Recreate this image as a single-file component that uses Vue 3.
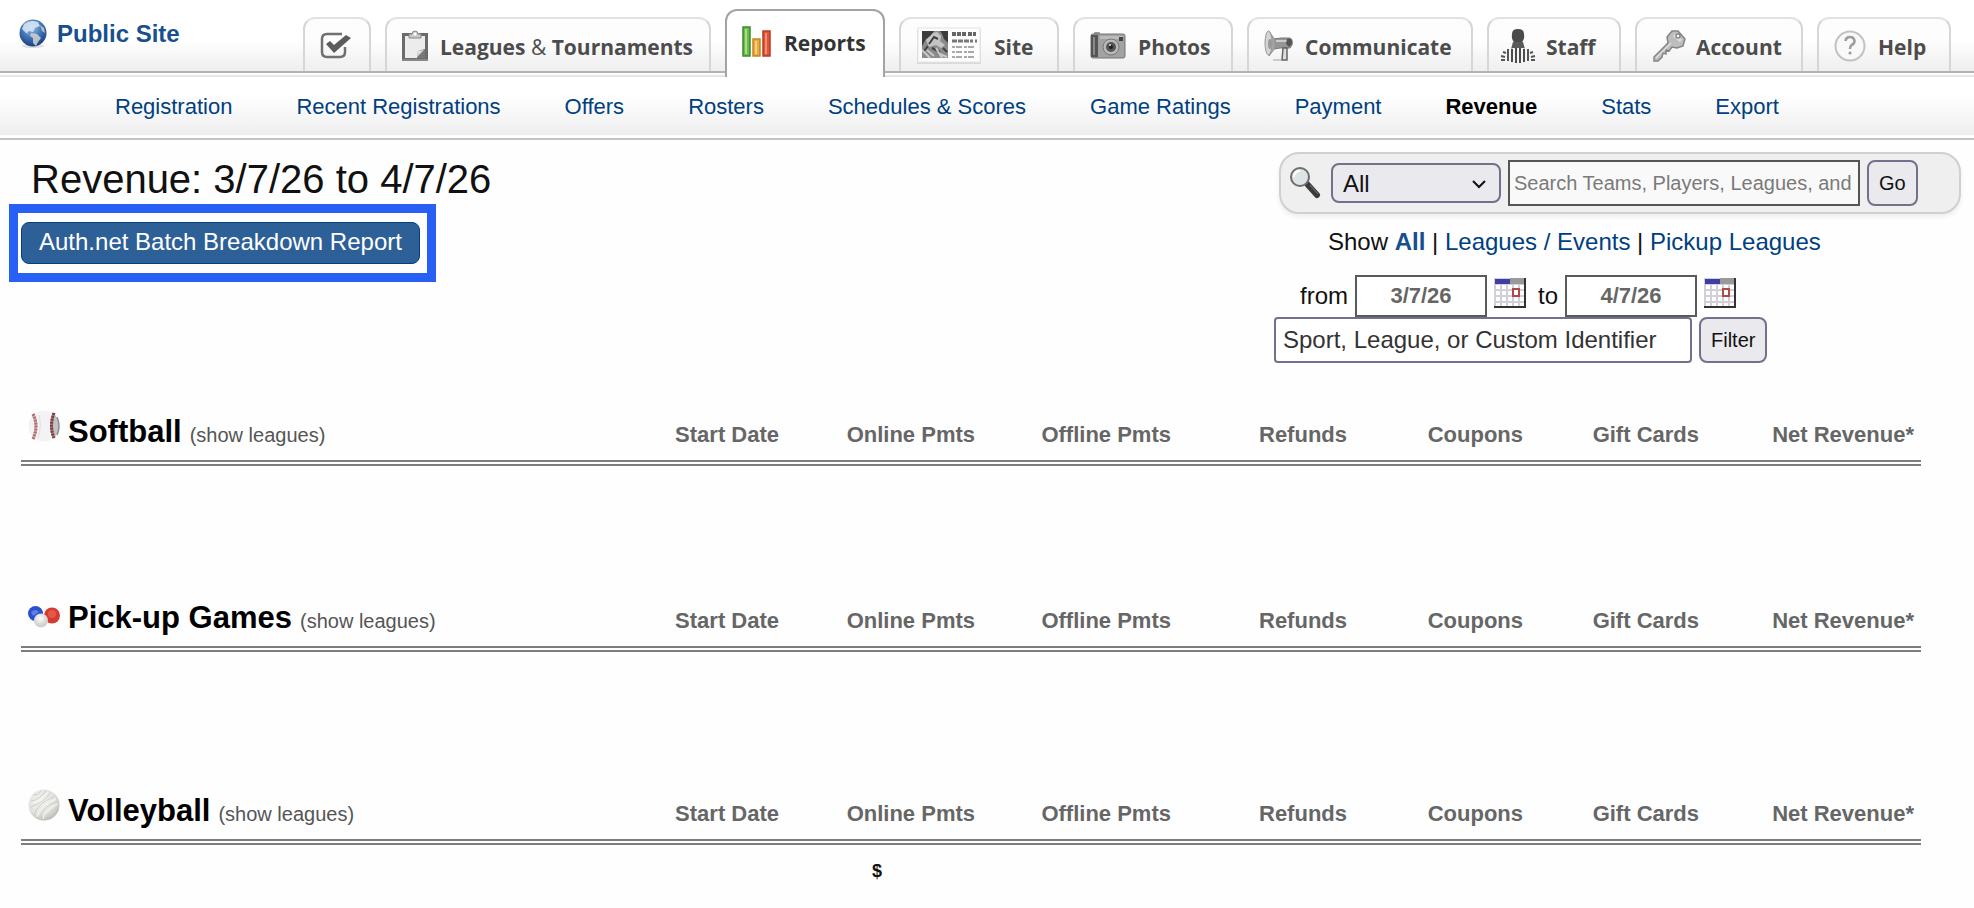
<template>
  <div class="page">

    <!-- TOP BAR -->
    <header class="topbar">
      <a class="public-site" href="#">
        <svg width="30" height="30" viewBox="0 0 30 30" aria-hidden="true">
          <defs>
            <radialGradient id="globe" cx="0.45" cy="0.3" r="0.7">
              <stop offset="0" stop-color="#9fc0e8" />
              <stop offset="0.5" stop-color="#4679b8" />
              <stop offset="1" stop-color="#17407f" />
            </radialGradient>
          </defs>
          <ellipse cx="15" cy="27" rx="11" ry="2" fill="#dedede" />
          <circle cx="15" cy="14" r="13.5" fill="url(#globe)" />
          <path d="M6 5 Q12 0 20 3 L22 7 L17 9 L15 13 L11 12 L9 14 L12 16 L8 14 L4 10 Z" fill="#dbe8f6" opacity="0.85" />
          <path d="M13 14 L19 15 L23 19 L20 23 L18 27 L15 24 L15 19 L12 17 Z" fill="#c9ccd2" opacity="0.9" />
          <path d="M22 6 L26 9 L27 14 L24 12 Z" fill="#aebdd2" />
        </svg>
        Public Site
      </a>

      <nav class="tabs">
        <a class="tab tab-check" href="#" aria-label="Tasks">
          <svg width="32" height="28" viewBox="0 0 32 28" fill="none" stroke="#707070">
            <path d="M22 2 H7 Q2 2 2 7 V20 Q2 25 7 25 H20 Q25 25 25 20 V15" stroke-width="2.5" />
            <path d="M6 12 L10 9 L14 13 L26 3 L31 6 L14 21 Z" fill="#5c5c5c" stroke="none" />
          </svg>
        </a>

        <a class="tab tab-leagues" href="#">
          <svg width="26" height="32" viewBox="0 0 26 32">
            <rect x="1.5" y="4.5" width="23" height="25" fill="#ededed" stroke="#6b6b6b" stroke-width="3" />
            <path d="M0 29 H26 V31 H0 Z" fill="#888" />
            <path d="M4 6 H22 V20 L15 27 H4 Z" fill="#ececec" />
            <path d="M15 28 L16 21 L23 19 V28 Z" fill="#777" />
            <path d="M15 27 L16 21 L22 20 Z" fill="#ddd" />
            <path d="M7 8 V4 H10 Q10 1 13 1 T16 4 H19 V8 Z" fill="#c9c9c9" stroke="#888" />
            <circle cx="13" cy="4" r="1.5" fill="#fff" />
          </svg>
          <span>Leagues <i>&amp;</i> Tournaments</span>
        </a>

        <a class="tab active tab-reports" href="#">
          <svg width="30" height="32" viewBox="0 0 30 32">
            <rect x="1" y="1" width="7" height="29" fill="#6cbb4c" stroke="#3d8a2c" stroke-width="1.5" />
            <rect x="3" y="3" width="2" height="25" fill="#a5df86" />
            <rect x="11" y="13" width="7" height="17" fill="#eda93d" stroke="#c78425" stroke-width="1.5" />
            <rect x="13" y="15" width="2" height="13" fill="#f9d183" />
            <rect x="21" y="5" width="7" height="25" fill="#df5638" stroke="#b93a23" stroke-width="1.5" />
            <rect x="23" y="7" width="2" height="21" fill="#f28e72" />
          </svg>
          <span>Reports</span>
        </a>

        <a class="tab tab-site" href="#">
          <svg width="66" height="38" viewBox="0 0 66 38">
            <rect x="1" y="2" width="64" height="35" rx="1" fill="#c9c9c9" opacity="0.6" />
            <rect x="2" y="1" width="62" height="34" fill="#fdfdfd" stroke="#e4e4e4" />
            <rect x="6" y="4" width="26" height="27" fill="#8a8a8a" />
            <path d="M6 4 H18 L15 9 L10 12 L6 19 Z M24 4 H32 V16 L28 12 L26 7 Z" fill="#3c3c3c" />
            <path d="M10 13 L17 6 L21 5 L25 9 L24 14 L29 18 L25 21 L20 18 L13 20 Z" fill="#c4c4c4" />
            <path d="M13 17 L18 10 L22 12 M16 21 L24 25 M8 24 L12 19 M27 21 L31 25" stroke="#3f3f3f" stroke-width="2" fill="none" />
            <path d="M6 23 L14 31 M11 23 L18 29 M20 21 L26 31 M24 27 L31 30" stroke="#c9c9c9" stroke-width="2" />
            <path d="M36 7 H50 M52 7 H60" stroke="#666" stroke-width="4" stroke-dasharray="4 1" />
            <path d="M36 14 H57 M59 14 H61" stroke="#777" stroke-width="3" stroke-dasharray="5 1" />
            <path d="M36 20 H60 M36 25 H60 M36 30 H60" stroke="#a9a9a9" stroke-width="2" stroke-dasharray="3 1 6 2" />
          </svg>
          <span>Site</span>
        </a>

        <a class="tab tab-photos" href="#">
          <svg width="36" height="28" viewBox="0 0 36 28">
            <rect x="4" y="0" width="6" height="3" rx="1" fill="#999" />
            <rect x="1" y="2" width="34" height="24" rx="2" fill="#a2a2a2" stroke="#747474" />
            <rect x="1" y="3" width="7" height="22" fill="#555" />
            <rect x="3" y="5" width="2" height="18" fill="#8a8a8a" />
            <rect x="10" y="4" width="23" height="3" fill="#bcbcbc" />
            <circle cx="21" cy="15" r="8" fill="#b9b9b9" stroke="#777" />
            <circle cx="21" cy="15" r="5" fill="#555" />
            <circle cx="21" cy="15" r="2" fill="#1f1f1f" />
            <circle cx="20" cy="13" r="1" fill="#ddd" />
            <rect x="29" y="5" width="4" height="4" fill="#444" />
          </svg>
          <span>Photos</span>
        </a>

        <a class="tab tab-communicate" href="#">
          <svg width="29" height="32" viewBox="0 0 29 32">
            <path d="M10 9 L17 8 H26 Q29 9 28 15 L26 18 H16 L10 19 Z" fill="#969696" stroke="#777" />
            <path d="M12 11 H25" stroke="#ccc" stroke-width="2" />
            <path d="M23 9 Q29 8 28 14 L25 17 L22 14 Z" fill="#555" />
            <path d="M19 18 H23 V30 H18 Z" fill="#ddd" stroke="#666" stroke-width="1.5" />
            <path d="M9 30 H17" stroke="#ccc" stroke-width="2" />
            <path d="M5 1 L11 10 V18 L5 26 Z" fill="#a6a6a6" stroke="#909090" />
            <ellipse cx="4.5" cy="13" rx="3.5" ry="12" fill="#d4d4d4" stroke="#999" />
            <ellipse cx="6" cy="14" rx="2" ry="5" fill="#999" />
          </svg>
          <span>Communicate</span>
        </a>

        <a class="tab tab-staff" href="#">
          <svg width="36" height="36" viewBox="0 0 36 36">
            <path d="M12 6 Q12 1 18 1 T24 6 Q25 12 21 15 V20 H15 V15 Q11 12 12 6 Z" fill="#4b4b4b" />
            <path d="M13 14 H23 L25 21 H11 Z" fill="#5a5a5a" />
            <path d="M2 33 Q0 26 5 22 L13 20 H23 L31 22 Q36 26 34 33 Q18 36 2 33 Z" fill="#f5f5f5" />
            <path d="M12 21 V34 M16 20 V35 M20 20 V35 M24 21 V34" stroke="#4b4b4b" stroke-width="2" />
            <path d="M8 21 V33 M28 21 V33" stroke="#555" stroke-width="2" />
            <path d="M3 24 L6 25 M1 28 L5 29 M1 32 L5 32 M33 24 L30 25 M35 28 L31 29 M35 32 L31 32" stroke="#555" stroke-width="2" />
          </svg>
          <span>Staff</span>
        </a>

        <a class="tab tab-account" href="#">
          <svg width="34" height="34" viewBox="0 0 34 34" fill="#bdbdbd" stroke="#858585" stroke-width="1.5">
            <path d="M2 28 L16 14 L15 8 L20 2 L26 2 L33 10 L31 17 L25 19 L20 18 L17 22 L14 21 V25 L11 24 L10 28 L6 32 L2 32 Z" />
            <path d="M4 29 L19 14" stroke="#ddd" />
            <path d="M22 6 L29 12" stroke="#ddd" stroke-width="3" />
            <circle cx="26" cy="7" r="2" fill="#fff" />
          </svg>
          <span>Account</span>
        </a>

        <a class="tab tab-help" href="#">
          <svg width="32" height="32" viewBox="0 0 32 32" fill="none">
            <circle cx="16" cy="16" r="14.5" fill="#f9f9f9" stroke="#c2c2c2" stroke-width="2" />
            <path d="M11.5 11 Q12 7 16 7 T20.5 11 Q20.5 14 17.5 15 Q16 16 16 19" stroke="#9c9c9c" stroke-width="2.5" />
            <circle cx="16" cy="23" r="1.5" fill="#999" />
          </svg>
          <span>Help</span>
        </a>
      </nav>
    </header>

    <!-- SUB NAV -->
    <nav class="subnav">
      <a
        v-for="link in links"
        :key="link"
        href="#"
        :class="{ current: link === currentLink }"
      >{{ link }}</a>
    </nav>

    <!-- CONTENT -->
    <main>
      <div class="intro">
        <div class="heading">
          <h1>Revenue: {{ from }} to {{ to }}</h1>
          <div class="highlight">
            <a class="report-link" href="#">Auth.net Batch Breakdown Report</a>
          </div>
        </div>

        <div class="tools">
          <!-- SEARCH -->
          <form class="search" @submit.prevent>
            <svg width="32" height="32" viewBox="0 0 32 32" aria-hidden="true">
              <path d="M19 18 L28 28" stroke="#3b3b3b" stroke-width="6" stroke-linecap="round" />
              <path d="M21 18 L29 27" stroke="#777" stroke-width="1" />
              <circle cx="11" cy="10" r="9" fill="#dde4e5" stroke="#6d6d6d" stroke-width="2" />
              <path d="M5 10 Q5 4 11 4" fill="none" stroke="#fff" stroke-width="2" />
            </svg>
            <div class="select">
              <select v-model="scope" aria-label="Search in">
                <option>All</option>
                <option>Teams</option>
                <option>Players</option>
                <option>Leagues</option>
              </select>
              <svg width="14" height="10" viewBox="0 0 14 10" fill="none" stroke="#111" stroke-width="2" aria-hidden="true">
                <path d="M1 2 L7 8 L13 2" />
              </svg>
            </div>
            <input
              v-model="query"
              type="text"
              aria-label="Search"
              placeholder="Search Teams, Players, Leagues, and"
            />
            <button>Go</button>
          </form>

          <p class="show">
            Show <a class="chosen" href="#">All</a> |
            <a href="#">Leagues / Events</a> |
            <a href="#">Pickup Leagues</a>
          </p>

          <!-- FILTERS -->
          <form @submit.prevent>
            <div class="dates">
              <label for="from">from</label>
              <input id="from" v-model="from" type="text" />
              <button class="calendar" type="button" aria-label="Pick start date">
                <svg width="32" height="30" viewBox="0 0 32 30">
                  <rect width="32" height="30" fill="#d2cfd6" />
                  <rect x="16" width="16" height="6" fill="#999" />
                  <rect x="1" y="1" width="15" height="5" fill="#3d3da8" />
                  <path d="M2 9 H30 M2 15 H30 M2 21 H30 M2 27 H30" stroke="#fff" stroke-width="4" stroke-dasharray="4 2" />
                  <rect x="19" y="11" width="6" height="7" fill="#fff" stroke="#b04a48" stroke-width="2" />
                  <path d="M31 0 V29 H0" fill="none" stroke="#333" stroke-width="2" />
                </svg>
              </button>
              <label class="to" for="to">to</label>
              <input id="to" v-model="to" type="text" />
              <button class="calendar" type="button" aria-label="Pick end date">
                <svg width="32" height="30" viewBox="0 0 32 30">
                  <rect width="32" height="30" fill="#d2cfd6" />
                  <rect x="16" width="16" height="6" fill="#999" />
                  <rect x="1" y="1" width="15" height="5" fill="#3d3da8" />
                  <path d="M2 9 H30 M2 15 H30 M2 21 H30 M2 27 H30" stroke="#fff" stroke-width="4" stroke-dasharray="4 2" />
                  <rect x="19" y="11" width="6" height="7" fill="#fff" stroke="#b04a48" stroke-width="2" />
                  <path d="M31 0 V29 H0" fill="none" stroke="#333" stroke-width="2" />
                </svg>
              </button>
            </div>
            <div class="identifier">
              <input v-model="identifier" type="text" aria-label="Identifier" />
              <button>Filter</button>
            </div>
          </form>
        </div>
      </div>

      <!-- SPORTS -->
      <table v-for="sport in sports" :key="sport.name">
        <colgroup>
          <col />
          <col class="col-mid" />
          <col class="col-mid" />
          <col class="col-mid" />
          <col class="col-small" />
          <col class="col-small" />
          <col class="col-small" />
          <col class="col-net" />
        </colgroup>
        <thead>
          <tr>
            <th class="sport">
              <svg v-if="sport.icon === 'softball'" width="32" height="32" viewBox="0 0 32 32">
                <circle cx="16" cy="16" r="15.5" fill="#f3f3f5" />
                <path d="M27 5 Q34 15 27 27 Q22 16 27 5" fill="#c2c2c4" />
                <path d="M29 7 Q33 16 29 25" fill="none" stroke="#8b8b8b" stroke-width="1.5" />
                <path d="M5 4 Q11 16 5 29" fill="none" stroke="#d9b9b7" stroke-width="3" />
                <path d="M5 4 Q11 16 5 29" fill="none" stroke="#b4706e" stroke-width="3" stroke-dasharray="2 1" />
                <path d="M26 3 Q21 16 26 28" fill="none" stroke="#a98586" stroke-width="3" />
                <path d="M26 3 Q21 16 26 28" fill="none" stroke="#7d3f40" stroke-width="3" stroke-dasharray="2 1" />
                <path d="M11 5 Q14 16 10 28" fill="none" stroke="#e0e0e3" />
              </svg>
              <svg v-else-if="sport.icon === 'pickup'" width="32" height="22" viewBox="0 0 32 22">
                <defs>
                  <radialGradient id="white-ball" cx="0.45" cy="0.35">
                    <stop offset="0" stop-color="#fff" />
                    <stop offset="1" stop-color="#d2d2cc" />
                  </radialGradient>
                </defs>
                <circle cx="7.5" cy="7.5" r="7.5" fill="#2951ce" />
                <path d="M3 6 Q8 2 11 6 L5 10 Z" fill="#5f80e0" />
                <circle cx="24" cy="9.5" r="8" fill="#d63a30" />
                <circle cx="24" cy="8" r="4" fill="#e4574b" />
                <circle cx="13" cy="14.5" r="7" fill="url(#white-ball)" />
              </svg>
              <svg v-else width="32" height="32" viewBox="0 0 32 32">
                <defs>
                  <radialGradient id="volley" cx="0.4" cy="0.35" r="0.65">
                    <stop offset="0" stop-color="#f2f2f0" />
                    <stop offset="0.7" stop-color="#e2e2de" />
                    <stop offset="1" stop-color="#bdbdb8" />
                  </radialGradient>
                </defs>
                <circle cx="16" cy="16" r="15.5" fill="url(#volley)" />
                <path d="M3 12 Q12 11 18 1 M2 18 Q16 14 23 3 M6 27 Q8 15 27 7 M12 30 Q13 18 30 12 M18 31 Q19 23 31 18 M5 6 Q10 7 13 2" fill="none" stroke="#cfcfca" />
                <path d="M4 14 Q14 12 20 3 M9 28 Q11 17 28 10 M15 30 Q16 21 30 15" fill="none" stroke="#f8f8f6" />
              </svg>
              <span class="sport-name">{{ sport.name }}</span>
              <a class="toggle" href="#">(show leagues)</a>
            </th>
            <th v-for="column in columns" :key="column">{{ column }}</th>
          </tr>
        </thead>
        <tbody>
          <tr>
            <td colspan="2"></td>
            <td>{{ sport.online }}</td>
            <td colspan="5"></td>
          </tr>
        </tbody>
      </table>
    </main>

  </div>
</template>

<script setup>
import { ref } from 'vue'

const links = [
  'Registration',
  'Recent Registrations',
  'Offers',
  'Rosters',
  'Schedules & Scores',
  'Game Ratings',
  'Payment',
  'Revenue',
  'Stats',
  'Export'
]
const currentLink = 'Revenue'

const scope = ref('All')
const query = ref('')
const from = ref('3/7/26')
const to = ref('4/7/26')
const identifier = ref('Sport, League, or Custom Identifier')

const columns = [
  'Start Date',
  'Online Pmts',
  'Offline Pmts',
  'Refunds',
  'Coupons',
  'Gift Cards',
  'Net Revenue*'
]

const sports = [
  { name: 'Softball', icon: 'softball', online: '' },
  { name: 'Pick-up Games', icon: 'pickup', online: '' },
  { name: 'Volleyball', icon: 'volleyball', online: '$' }
]
</script>

<style>
body {
  background: #fefefe;
  overflow: hidden;
}
</style>

<style scoped>
.page {
  height: 100vh;
  overflow: hidden;
  font-family: "Liberation Sans", Arial, sans-serif;
  font-size: 24px;
  line-height: 28px;
  color: #111;
}

.page * {
  box-sizing: border-box;
}

a {
  color: #004080;
  text-decoration: none;
}

input,
select,
button {
  font-family: inherit;
  margin: 0;
}

svg {
  flex-shrink: 0;
}

/* TOP BAR */
.topbar {
  display: flex;
  justify-content: space-between;
  height: 73px;
  padding: 0 23px 0 18px;
  background: linear-gradient(#fff 40px, #eee 71px);
  border-bottom: 2px solid #b3b3b3;
}

.public-site {
  display: flex;
  align-items: center;
  gap: 9px;
  height: 67px;
  font-weight: bold;
  color: #174f8f;
}

.tabs {
  display: flex;
  align-items: flex-end;
  gap: 14px;
}

.tab {
  display: flex;
  align-items: center;
  gap: 12px;
  height: 54px;
  padding: 2px 0 0 15px;
  border: 2px solid #d6d6d6;
  border-top-color: #e2e2e2;
  border-bottom: none;
  border-radius: 12px 12px 0 0;
  background: linear-gradient(#fdfdfd 40%, #efefef);
  font-family: "Open Sans", sans-serif;
  font-size: 21px;
  font-weight: bold;
  white-space: nowrap;
  color: #4c4c4c;
}

.tab span {
  padding-top: 2px;
}

.tab i {
  font-style: normal;
  font-weight: normal;
}

.tab.active {
  z-index: 1;
  height: 68px;
  margin-bottom: -6px;
  padding-bottom: 6px;
  border-color: #a3a3a3;
  background: #fff;
  color: #333;
}

.tab-check {
  width: 68px;
}

.tab-leagues {
  width: 326px;
}

.tab-reports,
.tab-site,
.tab-photos {
  width: 160px;
}

.tab-communicate {
  width: 226px;
}

.tab-staff,
.tab-help {
  width: 134px;
}

.tab-staff {
  gap: 10px;
  padding-left: 11px;
}

.tab-account {
  width: 168px;
  gap: 10px;
}

/* SUB NAV */
.subnav {
  display: flex;
  gap: 64px;
  height: 65px;
  padding: 16px 115px 0;
  border-top: 2px solid #e6e6e6;
  border-bottom: 2px solid #c4c4c4;
  margin-top: 2px;
  background: linear-gradient(#fff 30%, #eee 95%, #fff 96%);
  font-size: 22px;
  white-space: nowrap;
}

.subnav .current {
  font-weight: bold;
  color: #000;
}

/* INTRO */
.intro {
  display: flex;
  justify-content: space-between;
  padding: 12px 13px 0 9px;
}

h1 {
  margin: 0 0 0 22px;
  padding: 5px 0 3px;
  font-size: 40px;
  font-weight: 300;
  line-height: 44px;
}

.highlight {
  display: inline-block;
  border: 9px solid #2860f6;
  padding: 9px 7px 9px 3px;
}

.report-link {
  display: block;
  padding: 5px 17px 7px;
  border: 1px solid #063f80;
  border-radius: 8px;
  background: #2c6096;
  color: #fff;
}

/* SEARCH */
.search {
  display: flex;
  align-items: center;
  width: 682px;
  height: 62px;
  margin-left: 5px;
  padding: 0 8px;
  border: 2px solid #d0d0d0;
  border-radius: 20px;
  background: #efefef;
  box-shadow: 0 3px 4px #eee;
}

.select {
  position: relative;
  margin: 0 7px 0 10px;
}

.select select {
  display: block;
  width: 170px;
  height: 40px;
  padding: 0 10px;
  border: 2px solid #73708b;
  border-radius: 8px;
  background: #e9e9ee;
  appearance: none;
  font-size: 24px;
  color: #111;
}

.select svg {
  position: absolute;
  top: 16px;
  right: 15px;
  pointer-events: none;
}

.search input {
  width: 352px;
  height: 46px;
  padding: 0 4px;
  border: 2px solid #555;
  background: #f9f9f9;
  font-size: 20px;
}

.search input::placeholder {
  color: #7a7a7a;
}

.search button,
.identifier button {
  height: 46px;
  margin-left: 7px;
  padding: 0 10px;
  border: 2px solid #73708b;
  border-radius: 8px;
  background: #e9e9ee;
  font-size: 20px;
  color: #111;
}

/* FILTERS */
.show {
  margin: 14px 0 19px 54px;
}

.chosen {
  font-weight: bold;
  color: #174f8f;
}

.dates {
  display: flex;
  align-items: center;
  padding-left: 26px;
}

.dates label {
  margin-right: 7px;
}

.dates .to {
  margin-left: 12px;
}

.dates input {
  width: 132px;
  height: 42px;
  padding: 0;
  border: 2px solid #5a5a5a;
  background: #fff;
  font-size: 22px;
  font-weight: bold;
  text-align: center;
  color: #666;
}

.calendar {
  height: 30px;
  margin: 0 0 6px 7px;
  padding: 0;
  border: none;
  background: none;
}

.calendar svg {
  display: block;
}

.identifier {
  display: flex;
}

.identifier input {
  width: 418px;
  height: 46px;
  padding: 0 7px;
  border: 2px solid #73708b;
  border-radius: 4px;
  background: #fff;
  font-size: 24px;
  color: #333;
}

/* SPORTS */
table {
  width: calc(100% - 74px);
  margin-left: 21px;
  border-spacing: 0;
  table-layout: fixed;
}

.intro + table {
  margin-top: 44px;
}

.col-mid {
  width: 196px;
}

.col-small {
  width: 176px;
}

.col-net {
  width: 215px;
}

th {
  padding: 0 7px 7px 0;
  border-bottom: 6px double #7d7d7d;
  vertical-align: baseline;
  text-align: right;
  font-size: 22px;
  line-height: 36px;
  white-space: nowrap;
  color: #666;
}

th.sport {
  padding-left: 7px;
  text-align: left;
}

.sport svg {
  margin: 3px 8px 0 0;
  vertical-align: baseline;
}

.sport-name {
  font-size: 31px;
  color: #000;
}

.toggle {
  margin-left: 8px;
  font-size: 20px;
  font-weight: normal;
  color: #555;
}

td {
  height: 134px;
  padding: 12px 14px 0 0;
  vertical-align: top;
  text-align: center;
  font-size: 18px;
  font-weight: bold;
}
</style>
